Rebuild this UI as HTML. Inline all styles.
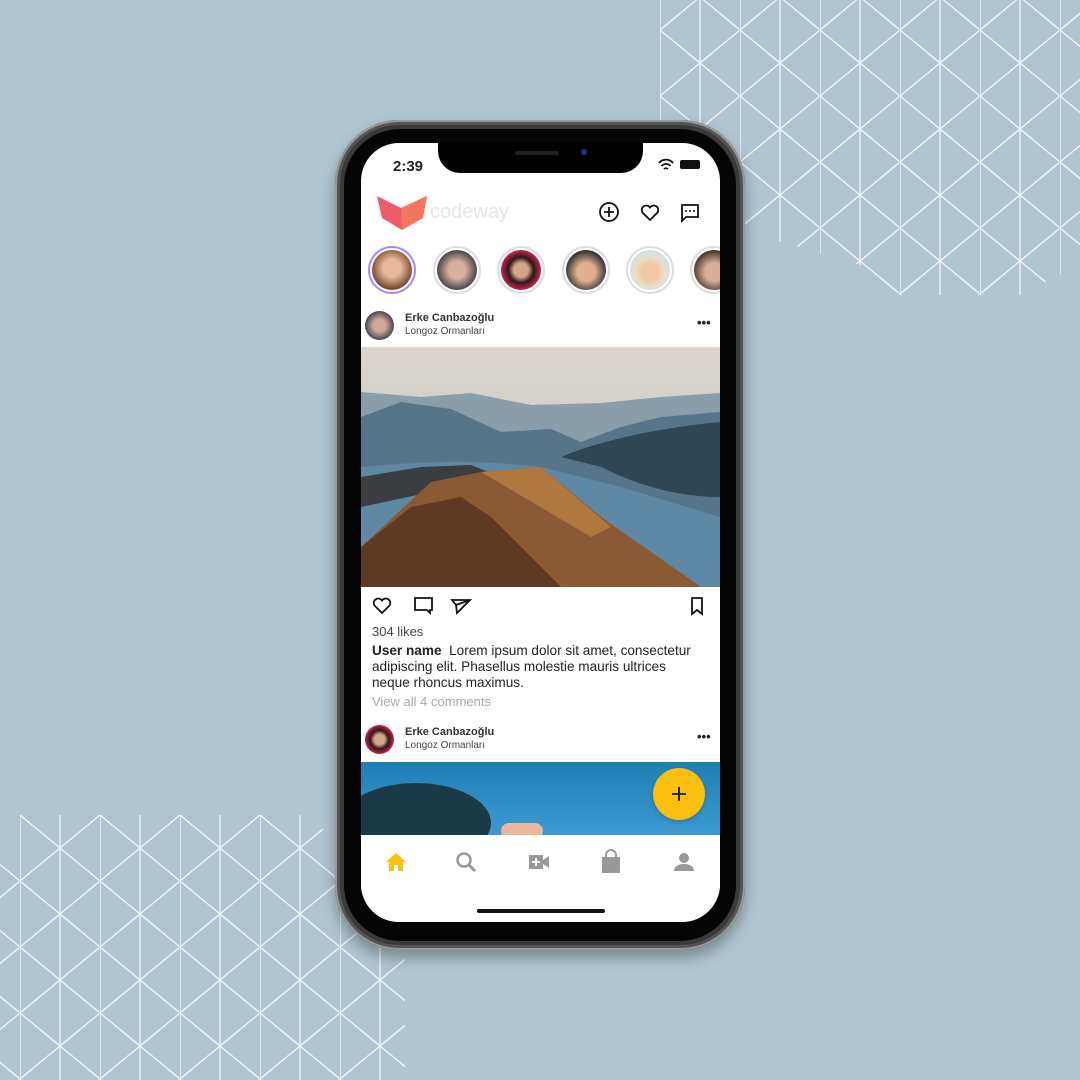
<!DOCTYPE html>
<html><head><meta charset="utf-8"><style>
body{margin:0;width:1080px;height:1080px;background:#afc6d0;position:relative;overflow:hidden;font-family:"Liberation Sans",sans-serif}
.abs{position:absolute}
.scr{position:absolute;left:361px;top:143px;width:359px;height:779px;background:#fff;border-radius:38px;overflow:hidden}
.t{position:absolute;white-space:nowrap;color:#222}
.av{position:absolute;width:48px;height:48px;border-radius:50%;border:2px solid #ddd;box-sizing:border-box;background:#fff}
.av i{position:absolute;inset:2px;border-radius:50%;display:block}
</style></head><body>
<svg class="abs" style="left:0;top:0" width="1080" height="1080">
<defs>
<pattern id="p" x="660" y="30" width="80" height="66" patternUnits="userSpaceOnUse">
<g stroke="#fff" stroke-width="1.3" fill="none" opacity=".85">
<line x1="0" y1="-10" x2="0" y2="80"/><line x1="40" y1="-10" x2="40" y2="80"/>
<line x1="0" y1="0" x2="80" y2="66"/><line x1="0" y1="66" x2="80" y2="0"/>
<line x1="-40" y1="33" x2="40" y2="99"/><line x1="40" y1="-33" x2="120" y2="33"/>
<line x1="-40" y1="33" x2="40" y2="-33"/><line x1="40" y1="99" x2="120" y2="33"/>
</g></pattern>
<pattern id="q" x="20" y="815" width="80" height="66" patternUnits="userSpaceOnUse">
<g stroke="#fff" stroke-width="1.3" fill="none" opacity=".85">
<line x1="0" y1="-10" x2="0" y2="80"/><line x1="40" y1="-10" x2="40" y2="80"/>
<line x1="0" y1="0" x2="80" y2="66"/><line x1="0" y1="66" x2="80" y2="0"/>
<line x1="-40" y1="33" x2="40" y2="99"/><line x1="40" y1="-33" x2="120" y2="33"/>
<line x1="-40" y1="33" x2="40" y2="-33"/><line x1="40" y1="99" x2="120" y2="33"/>
</g></pattern>
</defs>
<polygon points="660,0 1080,0 1080,265 1020,295 900,295 860,265 740,230 660,200" fill="url(#p)"/>
<polygon points="20,815 300,815 405,880 405,1080 0,1080 0,860" fill="url(#q)"/>
</svg>
<div class="abs" style="left:335px;top:120px;width:410px;height:830px;border-radius:64px;background:#3a3a3a;box-shadow:0 8px 14px rgba(0,0,0,.3),inset 0 0 0 2px #999,inset 0 0 0 5px #555"></div>
<div class="abs" style="left:344px;top:129px;width:392px;height:812px;border-radius:56px;background:#050505"></div>
<div class="scr">
 <div class="abs" style="left:77px;top:-2px;width:205px;height:32px;background:#000;border-radius:0 0 22px 22px"></div>
 <div class="abs" style="left:154px;top:8px;width:44px;height:4px;border-radius:2px;background:#222"></div>
 <div class="abs" style="left:220px;top:6px;width:6px;height:6px;border-radius:50%;background:#1a3a8a"></div>
 <div class="t" style="left:32px;top:15px;font-size:15px;font-weight:bold">2:39</div>
 <svg class="abs" style="left:297px;top:15px" width="45" height="14"><path d="M1 5a9 9 0 0 1 14 0M3.5 8a6 6 0 0 1 9 0M6 11a3 3 0 0 1 4 0" stroke="#111" stroke-width="1.8" fill="none"/><rect x="22" y="2" width="20" height="9" rx="2" fill="#111"/></svg>
 <svg class="abs" style="left:16px;top:53px" width="52" height="34"><polygon points="0,0 24,12 50,0 46,22 25,34 5,22" fill="#ee5b6b"/><polygon points="24,12 50,0 46,22 25,34" fill="#f27e5b" opacity=".8"/></svg>
 <div class="t" style="left:69px;top:58px;font-size:20px;color:#e6e6e6">codeway</div>
 <svg class="abs" style="left:237px;top:58px" width="110" height="24">
  <g stroke="#111" stroke-width="1.8" fill="none"><circle cx="11" cy="11" r="9"/><path d="M11 6v10M6 11h10"/>
  <path d="M52 19l-7.5-7.5a4.5 4.5 0 0 1 7.5-5 4.5 4.5 0 0 1 7.5 5z"/>
  <path d="M84 4h16v12H88l-4 4z"/></g><g fill="#111"><circle cx="88" cy="10" r="1"/><circle cx="92" cy="10" r="1"/><circle cx="96" cy="10" r="1"/></g></svg>
 <div class="av" style="left:7px;top:103px;border-color:#a88af5"><i style="background:radial-gradient(circle at 50% 45%,#e8b89a 30%,#7a4a30 70%)"></i></div>
 <div class="av" style="left:72px;top:103px"><i style="background:radial-gradient(circle at 50% 50%,#d8b0a0 30%,#3a3a40 75%)"></i></div>
 <div class="av" style="left:136px;top:103px"><i style="background:radial-gradient(circle at 50% 50%,#d9a58a 25%,#2a1a18 45%,#c8204a 70%)"></i></div>
 <div class="av" style="left:201px;top:103px"><i style="background:radial-gradient(circle at 50% 55%,#e0b090 30%,#333 70%)"></i></div>
 <div class="av" style="left:265px;top:103px"><i style="background:radial-gradient(circle at 50% 55%,#f0c8a8 28%,#e8e0c8 50%,#cde0e8 75%)"></i></div>
 <div class="av" style="left:329px;top:103px"><i style="background:radial-gradient(circle at 50% 55%,#d8b098 30%,#503830 70%)"></i></div>
 <div class="abs" style="left:4px;top:168px;width:29px;height:29px;border-radius:50%;background:radial-gradient(circle at 50% 50%,#d0a898 30%,#3a3a48 75%)"></div>
 <div class="t" style="left:44px;top:169px;font-size:11px;font-weight:bold;color:#333">Erke Canbazoğlu</div>
 <div class="t" style="left:44px;top:183px;font-size:10px;color:#444">Longoz Ormanları</div>
 <div class="t" style="left:336px;top:172px;font-size:13px;font-weight:bold">•••</div>
 <svg class="abs" style="left:0;top:204px" width="359" height="240">
  <defs><linearGradient id="sk" x1="0" y1="0" x2="0" y2="1"><stop offset="0" stop-color="#dcd6ce"/><stop offset="1" stop-color="#b8c2c6"/></linearGradient></defs>
  <rect width="359" height="240" fill="url(#sk)"/>
  <path d="M0 45 L60 50 110 46 170 58 240 56 300 50 359 46 359 120 0 120z" fill="#8a9eaa"/>
  <path d="M0 70 L40 55 90 62 140 85 190 82 220 95 260 80 300 70 359 65 359 240 0 240z" fill="#56748a"/>
  <path d="M200 110 Q260 85 359 75 V150 Q300 150 240 120z" fill="#2f4656"/>
  <path d="M0 120 Q100 110 180 120 L260 140 359 170 359 240 0 240z" fill="#5f88a4"/>
  <path d="M0 130 L60 120 110 118 140 130 0 160z" fill="#3a3e40"/>
  <path d="M0 200 L70 135 120 125 180 120 240 170 340 240 0 240z" fill="#8a5a34"/>
  <path d="M0 240 L0 200 50 160 100 150 130 170 200 240z" fill="#5e3a22"/>
  <path d="M120 125 L180 120 250 180 230 190z" fill="#b0783e"/>
 </svg>
 <svg class="abs" style="left:10px;top:451px" width="345" height="24"><g stroke="#111" stroke-width="1.8" fill="none">
  <path d="M11 19l-7.5-7.5a4.5 4.5 0 0 1 7.5-5 4.5 4.5 0 0 1 7.5 5z"/>
  <path d="M44 4h17v12h-2v3l-3-3H44z"/>
  <path d="M81 6l18 0-13 13-1-8zM85 11l14-5"/>
  <path d="M321 4h10v16l-5-4-5 4z"/></g></svg>
 <div class="t" style="left:11px;top:481px;font-size:13px;color:#444">304 likes</div>
 <div class="t" style="left:11px;top:500px;font-size:13.6px;line-height:16px;white-space:normal;width:332px;color:#222"><b>User name</b>&nbsp; Lorem ipsum dolor sit amet, consectetur adipiscing elit. Phasellus molestie mauris ultrices neque rhoncus maximus.</div>
 <div class="t" style="left:11px;top:551px;font-size:13px;color:#aaa">View all 4 comments</div>
 <div class="abs" style="left:4px;top:582px;width:29px;height:29px;border-radius:50%;background:radial-gradient(circle at 50% 50%,#d9a58a 25%,#2a1a18 45%,#c8204a 70%)"></div>
 <div class="t" style="left:44px;top:583px;font-size:11px;font-weight:bold;color:#333">Erke Canbazoğlu</div>
 <div class="t" style="left:44px;top:597px;font-size:10px;color:#444">Longoz Ormanları</div>
 <div class="t" style="left:336px;top:586px;font-size:13px;font-weight:bold">•••</div>
 <div class="abs" style="left:0;top:619px;width:359px;height:73px;background:linear-gradient(180deg,#1f7fb5,#3c9ad0)"></div>
 <div class="abs" style="left:-20px;top:640px;width:150px;height:80px;border-radius:50%;background:#1a3a48"></div>
 <div class="abs" style="left:140px;top:680px;width:42px;height:16px;border-radius:8px;background:#e9b89a"></div>
 <div class="abs" style="left:292px;top:625px;width:52px;height:52px;border-radius:50%;background:#fbbf0e;box-shadow:0 2px 4px rgba(0,0,0,.2)"></div>
 <svg class="abs" style="left:292px;top:625px" width="52" height="52"><path d="M26 19v14M19 26h14" stroke="#111" stroke-width="1.8"/></svg>
 <div class="abs" style="left:0;top:692px;width:359px;height:87px;background:#fff"></div>
 <svg class="abs" style="left:20px;top:706px" width="320" height="26">
  <path d="M5 13L15 4 25 13h-3v9h-5v-6h-4v6H8v-9z" fill="#fbbf0e"/>
  <circle cx="83" cy="11" r="6.5" stroke="#999" stroke-width="2.5" fill="none"/><path d="M88 16l6 6" stroke="#999" stroke-width="3"/>
  <path d="M148 6h14v14h-14zM162 11l6-4v12l-6-4z" fill="#999"/><path d="M155 9v8M151 13h8" stroke="#fff" stroke-width="2"/>
  <path d="M221 8h18v16h-18z" fill="#999"/><path d="M225 9V6a5 5 0 0 1 10 0v3" stroke="#999" stroke-width="2" fill="none"/>
  <circle cx="303" cy="9" r="5" fill="#999"/><path d="M293 22c0-5 5-7 10-7s10 2 10 7z" fill="#999"/>
 </svg>
 <div class="abs" style="left:116px;top:766px;width:128px;height:4px;border-radius:2px;background:#111"></div>
</div>
</body></html>
